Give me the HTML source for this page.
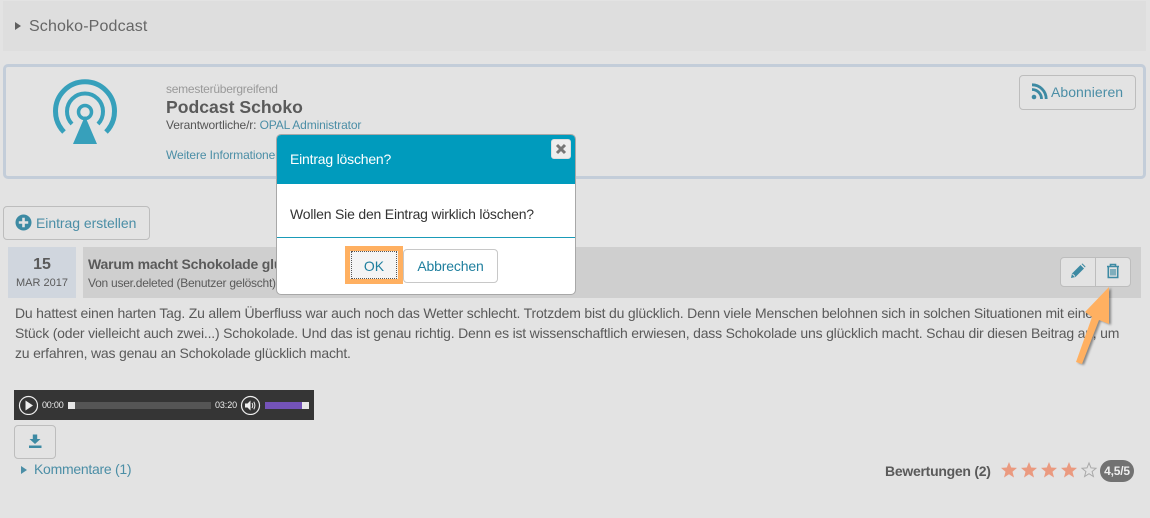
<!DOCTYPE html>
<html lang="de"><head><meta charset="utf-8"><title>Schoko-Podcast</title>
<style>
html,body{margin:0;padding:0;width:1150px;height:518px;overflow:hidden;background:#e3e3e3}
body{position:relative;font-family:"Liberation Sans",Arial,sans-serif;font-size:14px;color:#5a5a5a}
.a{position:absolute;white-space:nowrap}
.btn{position:absolute;box-sizing:border-box;border:1px solid #bdbdbd;border-radius:4px}
.link{color:#4b8ea6}
</style></head><body>
<div class="a" style="left:3px;top:1px;width:1143px;height:50px;background:#dedede"></div>
<div class="a" style="left:15px;top:22px;width:0;height:0;border-left:6px solid #5f5f5f;border-top:4.5px solid transparent;border-bottom:4.5px solid transparent"></div>
<div class="a" style="left:29px;top:17px;font-size:16px;line-height:20px;color:#666;letter-spacing:.14px">Schoko-Podcast</div>

<div class="a" style="left:3px;top:64px;width:1143px;height:115px;box-sizing:border-box;border:3px solid #c3cdd9;border-radius:5px"></div>
<svg class="a" style="left:50px;top:78px" width="70" height="70" viewBox="0 0 70 70">
<g fill="none" stroke="#37a0bb">
<path d="M14 54A29.500 29.500 0 1 1 56 54" stroke-width="5"/>
<path d="M22 46A18 18 0 1 1 48 46" stroke-width="4"/>
<circle cx="35" cy="34" r="6.500" stroke-width="3.500"/>
</g>
<path d="M35 38L23 66H47Z" fill="#37a0bb"/>
</svg>
<div class="a" style="left:166px;top:82px;font-size:12px;line-height:14px;color:#999;letter-spacing:-.25px">semesterübergreifend</div>
<div class="a" style="left:166px;top:97px;font-size:17.600px;line-height:20px;font-weight:bold;color:#5a5a5a">Podcast Schoko</div>
<div class="a" style="left:166px;top:118px;font-size:12px;line-height:15px;color:#555;letter-spacing:-.13px">Verantwortliche/r: <span class="link">OPAL Administrator</span></div>
<div class="a link" style="left:166px;top:148px;font-size:12px;line-height:15px;letter-spacing:-.1px">Weitere Informationen</div>
<div class="btn" style="left:1019px;top:75px;width:117px;height:35px"></div>
<svg class="a" style="left:1031px;top:83px" width="17" height="17" viewBox="0 0 17 17"><circle cx="3" cy="14" r="2.300" fill="#3d8aa3"/><path d="M1 6.500A9.500 9.500 0 0 1 10.500 16M1 1.800A14.200 14.200 0 0 1 15.200 16" fill="none" stroke="#3d8aa3" stroke-width="2.800"/></svg>
<div class="a link" style="left:1051px;top:84px;line-height:16px;letter-spacing:.05px">Abonnieren</div>

<div class="btn" style="left:3px;top:206px;width:147px;height:34px"></div>
<svg class="a" style="left:15px;top:214px" width="18" height="18" viewBox="0 0 18 18"><circle cx="8.500" cy="8.500" r="8" fill="#3d8aa3"/><path d="M8.500 3.800V13.200M3.800 8.500H13.200" stroke="#e3e3e3" stroke-width="2.600"/></svg>
<div class="a link" style="left:36px;top:215px;line-height:16px;letter-spacing:-.05px">Eintrag erstellen</div>

<div class="a" style="left:8px;top:247px;width:68px;height:51px;background:#d0d6de"></div>
<div class="a" style="left:8px;top:255px;width:68px;text-align:center;font-size:16px;font-weight:bold;line-height:20px;color:#5a5a5a">15</div>
<div class="a" style="left:8px;top:276px;width:68px;text-align:center;font-size:11px;line-height:15px;color:#5a5a5a">MAR 2017</div>
<div class="a" style="left:83px;top:247px;width:1058px;height:51px;background:#cfcfcf"></div>
<div class="a" style="left:88px;top:256px;font-size:14px;line-height:16px;font-weight:bold;color:#5a5a5a;letter-spacing:-.2px">Warum macht Schokolade glücklich?</div>
<div class="a" style="left:88px;top:276px;font-size:12px;line-height:15px;color:#5a5a5a;letter-spacing:-.25px">Von user.deleted (Benutzer gelöscht)</div>
<div class="a" style="left:1060px;top:257px;width:71px;height:30px;box-sizing:border-box;border:1px solid #bdbdbd;border-radius:4px;background:#e3e3e3"></div>
<div class="a" style="left:1095px;top:258px;width:1px;height:28px;background:#bdbdbd"></div>
<svg class="a" style="left:1070px;top:263px" width="16" height="16" viewBox="0 0 16 16"><path d="M1 15L2 10.500 10.500 2 14 5.500 5.500 14Z M11.500 1L12.500 0.500 15.500 3.500 15 4.500Z" fill="#3d8aa3"/><path d="M2.500 11L5 13.500" stroke="#e3e3e3"/></svg>
<svg class="a" style="left:1105px;top:263px" width="16" height="16" viewBox="0 0 16 16"><path d="M2 3.500H14M5.500 3.500V1.500H10.500V3.500M3.300 4V14.500H12.700V4" fill="none" stroke="#3d8aa3" stroke-width="1.600"/><path d="M6 6V12.500M8 6V12.500M10 6V12.500" stroke="#3d8aa3" stroke-width="1.200"/></svg>

<div class="a" style="left:15px;top:303px;line-height:20px;color:#5a5a5a;letter-spacing:-.2px">Du hattest einen harten Tag. Zu allem Überfluss war auch noch das Wetter schlecht. Trotzdem bist du glücklich. Denn viele Menschen belohnen sich in solchen Situationen mit einem<br>Stück (oder vielleicht auch zwei...) Schokolade. Und das ist genau richtig. Denn es ist wissenschaftlich erwiesen, dass Schokolade uns glücklich macht. Schau dir diesen Beitrag an, um<br>zu erfahren, was genau an Schokolade glücklich macht.</div>

<div class="a" style="left:14px;top:390px;width:300px;height:30px;background:#353535"></div>
<svg class="a" style="left:18px;top:395px" width="20" height="20" viewBox="0 0 20 20"><circle cx="10.500" cy="10.500" r="9" fill="none" stroke="#eee" stroke-width="1.200"/><path d="M7.500 5.500L15 10.500 7.500 15.500Z" fill="#eee"/></svg>
<div class="a" style="left:42px;top:400px;font-size:9px;line-height:11px;color:#eee;letter-spacing:-.2px">00:00</div>
<div class="a" style="left:68px;top:402px;width:143px;height:7px;background:#555"></div>
<div class="a" style="left:68px;top:402px;width:7px;height:7px;background:#e6e6e6"></div>
<div class="a" style="left:215px;top:400px;font-size:9px;line-height:11px;color:#eee;letter-spacing:-.1px">03:20</div>
<svg class="a" style="left:240px;top:395px" width="21" height="20" viewBox="0 0 21 20"><circle cx="10.500" cy="10.500" r="9" fill="none" stroke="#eee" stroke-width="1.200"/><path d="M5 8.500H7.500L10.500 5.500V15.500L7.500 12.500H5Z" fill="#eee"/><path d="M12 8Q13.500 10.500 12 13M13.800 6.800Q16 10.500 13.800 14.200" fill="none" stroke="#eee"/></svg>
<div class="a" style="left:265px;top:402px;width:44px;height:7px;background:#e6e6e6"></div>
<div class="a" style="left:265px;top:402px;width:37px;height:7px;background:#7453b8"></div>
<div class="btn" style="left:14px;top:425px;width:42px;height:34px"></div>
<svg class="a" style="left:28px;top:434px" width="15" height="15" viewBox="0 0 15 15"><path d="M4.800 0.500H9.200V5H12.500L7 10 1.500 5H4.800Z" fill="#3d8aa3"/><rect x="1" y="11.500" width="12.500" height="2.500" fill="#3d8aa3"/></svg>
<div class="a" style="left:21px;top:466px;width:0;height:0;border-left:6px solid #4b8ea6;border-top:4px solid transparent;border-bottom:4px solid transparent"></div>
<div class="a link" style="left:34px;top:461px;line-height:16px;letter-spacing:-.28px">Kommentare (1)</div>

<div class="a" style="left:885px;top:463px;line-height:16px;font-weight:bold;color:#5a5a5a;letter-spacing:-.27px">Bewertungen (2)</div>
<svg class="a" style="left:1000px;top:461px" width="100" height="18" viewBox="0 0 100 18">
<g fill="#ea9a80">
<path d="M9 1L11.200 6.500 17 6.900 12.500 10.700 14 16.500 9 13.300 4 16.500 5.500 10.700 1 6.900 6.800 6.500Z"/>
<path transform="translate(20 0)" d="M9 1L11.200 6.500 17 6.900 12.500 10.700 14 16.500 9 13.300 4 16.500 5.500 10.700 1 6.900 6.800 6.500Z"/>
<path transform="translate(40 0)" d="M9 1L11.200 6.500 17 6.900 12.500 10.700 14 16.500 9 13.300 4 16.500 5.500 10.700 1 6.900 6.800 6.500Z"/>
<path transform="translate(60 0)" d="M9 1L11.200 6.500 17 6.900 12.500 10.700 14 16.500 9 13.300 4 16.500 5.500 10.700 1 6.900 6.800 6.500Z"/>
</g>
<path transform="translate(80 0)" d="M9 2L11 6.900 16 7.300 12.100 10.500 13.400 15.500 9 12.700 4.600 15.500 5.900 10.500 2 7.300 7 6.900Z" fill="none" stroke="#a9a9a9"/>
</svg>
<div class="a" style="left:1100px;top:460px;width:34px;height:22px;border-radius:11px;background:#727272;color:#eee;font-size:12px;font-weight:bold;line-height:22px;text-align:center;letter-spacing:-.2px">4,5/5</div>

<div class="a" style="left:276px;top:134px;width:300px;height:161px;box-sizing:border-box;background:#fff;border:1px solid #a8a8a8;border-radius:5px"></div>
<div class="a" style="left:277px;top:135px;width:298px;height:49px;background:#009bbd;border-radius:4px 4px 0 0"></div>
<div class="a" style="left:290px;top:151px;line-height:16px;color:#fff;letter-spacing:-.2px">Eintrag löschen?</div>
<div class="a" style="left:551px;top:139px;width:20px;height:20px;box-sizing:border-box;border-radius:3px;background:#eee;border:1px solid #ddd"></div>
<svg class="a" style="left:555px;top:143px" width="12" height="12" viewBox="0 0 12 12"><path d="M2 2L10 10M10 2L2 10" stroke="#777" stroke-width="3"/></svg>
<div class="a" style="left:290px;top:206px;line-height:16px;color:#333;letter-spacing:-.2px">Wollen Sie den Eintrag wirklich löschen?</div>
<div class="a" style="left:277px;top:237px;width:298px;height:1px;background:#1a9bb8"></div>
<div class="a" style="left:345px;top:246px;width:58px;height:38px;box-sizing:border-box;border:5px solid #ffb061;background:#f4f4f4"></div>
<div class="a" style="left:351px;top:251px;width:46px;height:28px;box-sizing:border-box;border:1px dotted #555"></div>
<div class="a" style="left:345px;top:258px;width:58px;text-align:center;line-height:16px;color:#1f7f9e">OK</div>
<div class="a" style="left:403px;top:249px;width:95px;height:34px;box-sizing:border-box;border:1px solid #c8c8c8;border-radius:4px;background:#fff;color:#1f7f9e;text-align:center;line-height:32px;letter-spacing:-.15px">Abbrechen</div>

<svg class="a" style="left:1070px;top:280px;filter:drop-shadow(2px 1px 1px rgba(0,0,0,.4))" width="50" height="90" viewBox="0 0 50 90">
<path d="M39 7L15 32 22 37 6 82 12 84 29 40 39 44Z" fill="#ffb061"/>
</svg>
</body></html>
